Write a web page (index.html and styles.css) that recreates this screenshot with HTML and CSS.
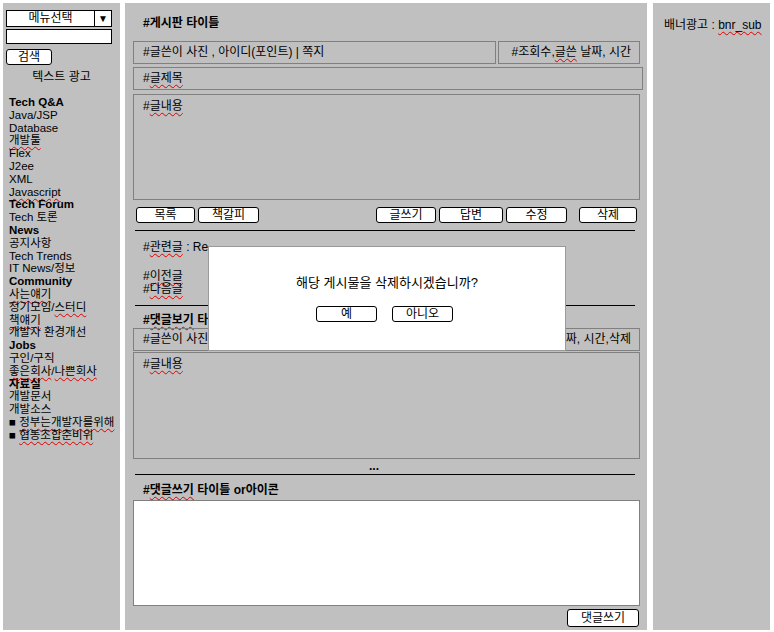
FILE: index.html
```html
<!DOCTYPE html>
<html lang="ko">
<head>
  <meta charset="UTF-8" />
  <meta name="viewport" content="width=device-width, initial-scale=1" />
  <title>게시판 - 글보기</title>
  <link rel="stylesheet" href="styles.css">
</head>
<body>

<div class="page">
  <!-- Left menu -->
  <div class="col side">
    <div class="select"><span class="select-label">메뉴선택</span><span class="select-arrow">▼</span></div>
    <div class="textbox"></div>
    <button class="btn search-btn">검색</button>
    <div class="text-ad">텍스트 광고</div>
    <ul class="menu">
      <li class="cat">Tech Q&amp;A</li>
      <li>Java/JSP</li>
      <li>Database</li>
      <li><span class="sp">개발툴</span></li>
      <li>Flex</li>
      <li>J2ee</li>
      <li>XML</li>
      <li><span class="sp">Javascript</span></li>
      <li class="cat">Tech Forum</li>
      <li>Tech 토론</li>
      <li class="cat">News</li>
      <li>공지사항</li>
      <li>Tech Trends</li>
      <li>IT News/정보</li>
      <li class="cat">Community</li>
      <li><span class="sp">사는얘기</span></li>
      <li>정기모임/<span class="sp">스터디</span></li>
      <li><span class="sp">책얘기</span></li>
      <li>개발자 환경개선</li>
      <li class="cat">Jobs</li>
      <li>구인/구직</li>
      <li><span class="sp">좋은회사</span>/<span class="sp">나쁜회사</span></li>
      <li class="cat">자료실</li>
      <li>개발문서</li>
      <li>개발소스</li>
      <li>■ <span class="sp">정부는개발자를위해</span></li>
      <li>■ <span class="sp">협동조합준비위</span></li>
    </ul>
  </div>

  <!-- Board view -->
  <div class="col main">
    <div class="board-title">#게시판 타이틀</div>

    <div class="row">
      <div class="box grow">#글쓴이 사진 , 아이디(포인트) | 쪽지</div>
      <div class="box meta">#조회수,<span class="sp">글쓴</span> 날짜, 시간</div>
    </div>
    <div class="row subject">
      <div class="box grow">#<span class="sp">글제목</span></div>
    </div>
    <div class="box content">#<span class="sp">글내용</span></div>

    <div class="actions">
      <button class="btn w59">목록</button>
      <button class="btn w61">책갈피</button>
      <button class="btn w60 push">글쓰기</button>
      <button class="btn w64">답변</button>
      <button class="btn w61">수정</button>
      <button class="btn w58 gap">삭제</button>
    </div>

    <div class="rule"></div>

    <div class="related">#<span class="sp">관련글</span> : Re</div>
    <div class="prev-next">
      <div>#<span class="sp">이전글</span></div>
      <div>#<span class="sp">다음글</span></div>
    </div>

    <div class="rule rule-b"></div>

    <div class="sub-title">#<span class="sp">댓글보기</span> 타이틀</div>
    <div class="row comment-row">
      <div class="box grow">#글쓴이 사진 , 아이디(포인트) | 쪽지</div>
      <div class="box meta wide">#조회수,글쓴 날짜, 시간,삭제</div>
    </div>
    <div class="box content comment-body">#<span class="sp">글내용</span></div>
    <div class="more">...</div>

    <div class="rule rule-c"></div>

    <div class="sub-title write-title">#<span class="sp">댓글쓰기</span> 타이틀 or아이콘</div>
    <div class="write-area"></div>
    <div class="write-actions">
      <button class="btn reply-btn">댓글쓰기</button>
    </div>

    <!-- Confirm dialog -->
    <div class="dialog">
      <p class="dialog-text">해당 게시물을 삭제하시겠습니까?</p>
      <div class="dialog-buttons">
        <button class="btn w61">예</button>
        <button class="btn w61">아니오</button>
      </div>
    </div>
  </div>

  <!-- Right banner -->
  <div class="col banner">배너광고 : <span class="sp">bnr_sub</span></div>
</div>

</body>
</html>
```

FILE: styles.css
```css
body {
  margin: 0;
  font-family: "Liberation Sans", "Noto Sans CJK KR", sans-serif;
  font-size: 12px;
  background-color: #fff;
  color: #000;
}
.page {
  display: flex;
  padding: 3px;
}
.col {
  background: #c0c0c0;
  height: 627px;
  box-sizing: border-box;
}
.sp {
  text-decoration: underline wavy #e00000;
  text-decoration-thickness: 1px;
  text-underline-offset: 2px;
}
.btn {
  background: #fff;
  border: 1px solid #000;
  border-radius: 3px;
  font-family: inherit;
  font-size: 12px;
  height: 16px;
  padding: 1px 0 0;
  line-height: 13px;
  color: #000;
  box-sizing: border-box;
}

/* left */
.side {
  width: 117px;
  padding: 7px 3px 0;
}
.select {
  display: flex;
  width: 106px;
  height: 17px;
  border: 1px solid #000;
  background: #fff;
  box-sizing: border-box;
  line-height: 15px;
}
.select-label {
  flex: 1;
  text-align: center;
}
.select-arrow {
  width: 16px;
  border-left: 1px solid #000;
  text-align: center;
  font-size: 10px;
}
.textbox {
  width: 106px;
  height: 15px;
  margin-top: 2px;
  border: 1px solid #000;
  background: #fff;
  box-sizing: border-box;
}
.search-btn {
  display: block;
  margin-top: 5px;
  width: 46px;
}
.text-ad {
  margin-top: 5px;
  line-height: 14px;
  text-align: center;
}
.menu {
  list-style: none;
  margin: 12px 0 0;
  padding-left: 3px;
  line-height: 12.8px;
  font-size: 11.5px;
}
.menu .cat {
  font-weight: bold;
}

/* center */
.main {
  position: relative;
  width: 522px;
  margin-left: 5px;
  padding: 0 7px 0 8px;
}
.board-title {
  height: 38px;
  box-sizing: border-box;
  padding: 13px 0 0 10px;
  line-height: 14px;
  font-weight: bold;
}
.row {
  display: flex;
  gap: 2px;
  height: 23px;
}
.box {
  border: 1px solid #808080;
  box-sizing: border-box;
  padding: 0 9px;
  line-height: 21px;
  white-space: nowrap;
  overflow: hidden;
}
.grow {
  flex: 1;
}
.meta {
  width: 142px;
  text-align: right;
  padding-right: 8px;
}
.meta.wide {
  width: 170px;
}
.subject {
  margin-top: 3px;
  margin-right: -3px;
}
.content {
  height: 106px;
  margin-top: 4px;
  padding-top: 4px;
  line-height: 14px;
}
.actions {
  display: flex;
  gap: 3px;
  margin: 7px 3px 0;
}
.actions .push {
  margin-left: auto;
}
.actions .gap {
  margin-left: 9px;
}
.w58 { width: 58px; }
.w59 { width: 59px; }
.w60 { width: 60px; }
.w61 { width: 61px; }
.w64 { width: 64px; }
.rule {
  height: 1px;
  background: #000;
  margin: 7px 5px 0 2px;
}
.related {
  margin-top: 9px;
  padding-left: 10px;
  line-height: 14px;
}
.prev-next {
  margin-top: 16px;
  padding-left: 10px;
  line-height: 13px;
}
.rule-b {
  margin-top: 9px;
}
.sub-title {
  margin-top: 7px;
  padding-left: 10px;
  line-height: 14px;
  font-weight: bold;
}
.comment-row {
  margin-top: 1px;
}
.comment-body {
  margin-top: 1px;
  height: 107px;
}
.more {
  margin-top: 1px;
  margin-right: 25px;
  text-align: center;
  font-weight: bold;
  line-height: 12px;
}
.rule-c {
  margin-top: 2px;
}
.write-title {
  margin-top: 8px;
}
.write-area {
  height: 106px;
  margin-top: 3px;
  background: #fff;
  border: 1px solid #808080;
  box-sizing: border-box;
}
.write-actions {
  display: flex;
  justify-content: flex-end;
  margin-top: 3px;
  padding-right: 1px;
}
.reply-btn {
  width: 72px;
  height: 18px;
  line-height: 15px;
}

/* dialog */
.dialog {
  position: absolute;
  left: 83px;
  top: 243px;
  width: 358px;
  height: 105px;
  box-sizing: border-box;
  background: #fff;
  border: 1px solid #9a9a9a;
  text-align: center;
}
.dialog-text {
  margin: 28px 0 0;
  font-size: 13px;
  line-height: 16px;
}
.dialog-buttons {
  display: flex;
  justify-content: center;
  gap: 15px;
  margin-top: 15px;
  padding-right: 5px;
}
.dialog-buttons .btn {
  height: 16px;
}

/* right */
.banner {
  width: 117px;
  margin-left: 6px;
  padding: 15px 0 0 11px;
  line-height: 14px;
}
```
